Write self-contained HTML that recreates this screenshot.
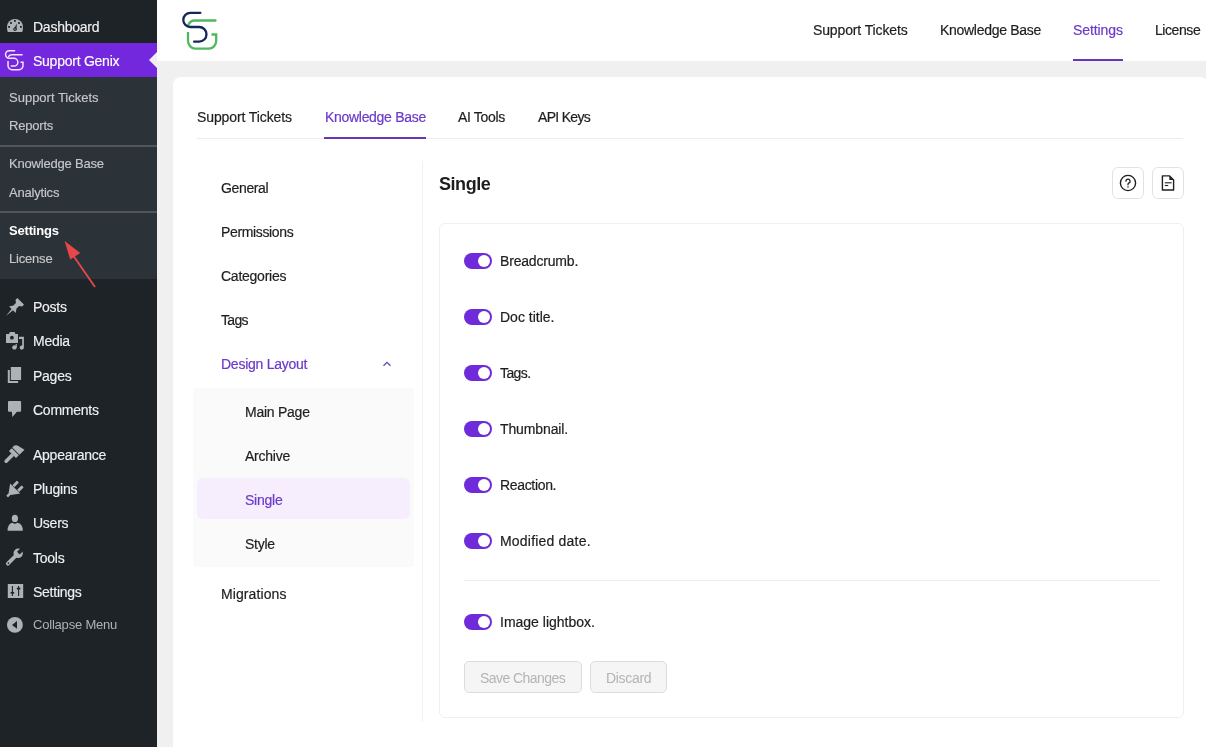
<!DOCTYPE html>
<html><head><meta charset="utf-8">
<style>
*{box-sizing:border-box;margin:0;padding:0}
html,body{width:1206px;height:747px;overflow:hidden;background:#f0f0f1;font-family:"Liberation Sans",sans-serif;position:relative}
.a{position:absolute;white-space:nowrap;will-change:transform}
.t14{font-size:14px;line-height:18px;letter-spacing:-0.25px}
.t13{font-size:13px;line-height:18px;letter-spacing:-0.2px}
#side{position:absolute;left:0;top:0;width:157px;height:747px;background:#1d2327}
#sub{position:absolute;left:0;top:77px;width:157px;height:202px;background:#2c3338}
.mi{color:#f0f0f1;-webkit-text-stroke:0.15px #f0f0f1}
.si{color:#c6c7ca;-webkit-text-stroke:0.15px #c6c7ca}
.ic{position:absolute;left:6px}
#header{position:absolute;left:157px;top:0;width:1049px;height:61px;background:#fff}
#card{position:absolute;left:173px;top:77px;width:1035px;height:700px;background:#fff;border-radius:8px}
.dark{color:#1e1e1e;-webkit-text-stroke:0.2px #1e1e1e}
.pur{color:#6c3ac9;-webkit-text-stroke:0.2px #6c3ac9}
.tog{position:absolute;left:464px;width:28px;height:16px;border-radius:8px;background:#6f2bd9}
.tog:after{content:"";position:absolute;right:2px;top:2px;width:12px;height:12px;border-radius:50%;background:#fff}
</style></head><body>
<div id="side"></div>
<div id="sub"></div>
<div class="a" style="left:0;top:43px;width:157px;height:34px;background:#7428de"></div>
<div class="a" style="left:149px;top:52px;width:0;height:0;border-top:8px solid transparent;border-bottom:8px solid transparent;border-right:8px solid #f0f0f1"></div>
<div class="a" style="left:0;top:145px;width:157px;height:2px;background:#4f555b"></div>
<div class="a" style="left:0;top:211px;width:157px;height:2px;background:#4f555b"></div>

<svg class="a" style="left:0;top:0" width="157" height="747" viewBox="0 0 157 747">
<g fill="#aeb1b5">
<path d="M7.8 32 Q7 30 7 27 A8 8 0 0 1 23 27 Q23 30 22.2 32 Z"/>
</g>
<g fill="#1d2327">
<rect x="14" y="20" width="1.8" height="1.8"/><rect x="10.1" y="22.1" width="1.8" height="1.8"/><rect x="18.1" y="22.1" width="1.8" height="1.8"/><rect x="8.2" y="26" width="1.8" height="1.8"/><rect x="20" y="26" width="1.8" height="1.8"/>
<path d="M13.8 29 L16.9 23.6 L16.4 29.5 Z"/><circle cx="15" cy="29.3" r="1.7"/>
</g>
<circle cx="15" cy="29.3" r="0.7" fill="#aeb1b5"/>
<g transform="translate(20.65 301.3) rotate(45)" fill="#aeb1b5"><path d="M-4.7 0 L4.7 0 L4.7 2.5 L2.2 4.5 L2.2 8 L4.6 11.8 L1 11.8 L0 20.5 L-1 11.8 L-4.6 11.8 L-2.2 8 L-2.2 4.5 L-4.7 2.5 Z"/></g>
<g fill="#aeb1b5">
<path d="M6 334 H9 L9.8 332 H14.6 L15.4 334 H18 V343 H6 Z M11.9 335.8 A1.9 1.9 0 1 0 11.9 339.6 A1.9 1.9 0 1 0 11.9 335.8 Z" fill-rule="evenodd"/>
<path d="M19 336.8 H23.9 V347.5 A2.1 2.1 0 1 1 22.2 345.5 V338.9 H19 Z"/>
<circle cx="14.4" cy="347.4" r="2.2"/><rect x="15.6" y="344" width="1.2" height="3.5"/>
<rect x="10.8" y="367" width="10.3" height="13"/>
<path d="M7.8 370 H9.8 V381 H18.1 V383 H7.8 Z"/>
<path d="M9 401 H20.1 Q21.1 401 21.1 402 V410.7 Q21.1 411.7 20.1 411.7 H17 L12.3 417 L11.9 411.7 H9 Q8 411.7 8 410.7 V402 Q8 401 9 401 Z"/>
</g>
<g transform="translate(7.2 460.1) rotate(-45)" fill="#aeb1b5">
<path d="M-1.5 -1.8 H8 V1.8 H-1.5 A1.8 1.8 0 0 1 -1.5 -1.8 Z"/>
<rect x="7.6" y="-5.2" width="4.1" height="10"/>
<path d="M12.5 -5.3 Q15.8 -6.2 17.6 -3 L19.6 4.9 H12.5 Z"/>
</g>
<g transform="translate(7.6 496) rotate(-45)" fill="#aeb1b5">
<rect x="-0.8" y="-1.3" width="4.5" height="2.6" rx="1"/>
<path d="M3 -1.5 L10.6 -7 V7.2 L3 1.5 Z"/>
<rect x="11" y="-4.4" width="6.5" height="3" rx="0.6"/>
<rect x="11" y="2.3" width="6.5" height="3" rx="0.6"/>
</g>
<g fill="#aeb1b5">
<ellipse cx="14.9" cy="518.4" rx="3.1" ry="3.7"/>
<path d="M7.6 530.7 Q7.6 523.5 12.5 522.7 Q14.9 524.8 17.3 522.7 Q22.8 523.5 22.8 530.7 Z"/>
</g>
<g transform="translate(8 563.5) rotate(-45)">
<path fill="#aeb1b5" d="M-0.2 -1.9 H11 V1.9 H-0.2 A1.9 1.9 0 0 1 -0.2 -1.9 Z"/>
<circle cx="14.4" cy="0" r="4.7" fill="#aeb1b5"/>
<rect x="14.6" y="-1.9" width="6" height="3.8" fill="#1d2327"/>
<circle cx="0.6" cy="0" r="0.8" fill="#1d2327"/>
</g>
<rect x="7.8" y="584" width="15.4" height="14" fill="#aeb1b5"/>
<g stroke="#1d2327" stroke-width="1.1" fill="none"><line x1="12.4" y1="586" x2="12.4" y2="596"/><line x1="10.6" y1="592.8" x2="14.2" y2="592.8" stroke-width="1.7"/><line x1="18.6" y1="586" x2="18.6" y2="596"/><line x1="16.8" y1="588.6" x2="20.4" y2="588.6" stroke-width="1.7"/></g>
<circle cx="14.9" cy="624.9" r="7.9" fill="#aeb1b5"/>
<path d="M12 624.9 L17 621 V628.8 Z" fill="#1d2327"/>
<g fill="none" stroke="#f8e4ff" stroke-width="2.8" stroke-linecap="round" transform="translate(3.8 48.2) scale(0.53)">
<path d="M20.4 4.8 H10.4 A7.1 7.1 0 0 0 10.4 19 H19.15 A7.35 7.35 0 0 1 19.15 33.7 H14.1" stroke-width="2.8"/>
<path d="M35.5 12.5 H14.7 A6.7 6.7 0 0 0 8.5 16.6" stroke-linecap="butt" stroke-width="2.8"/>
<path d="M8 24 V33.1 A7.5 7.5 0 0 0 15.5 40.6 H28.7 A7.5 7.5 0 0 0 36.2 33.1 V26.5 H31.5" stroke-linecap="butt" stroke-width="2.8"/>
</g>
<path d="M95 287 L72.5 254.5" stroke="#e8474a" stroke-width="1.8"/>
<path d="M64.6 240.9 L80.2 253 L70.2 259.6 Z" fill="#e8474a"/>
</svg>
<div class="a t14 mi" style="left:33px;top:18px">Dashboard</div>
<div class="a t14" style="left:33px;top:52px;color:#fff;-webkit-text-stroke:0.15px #fff">Support Genix</div>
<div class="a t13 si" style="left:9px;top:89px;letter-spacing:0">Support Tickets</div>
<div class="a t13 si" style="left:9px;top:117px">Reports</div>
<div class="a t13 si" style="left:9px;top:155px">Knowledge Base</div>
<div class="a t13 si" style="left:9px;top:184px">Analytics</div>
<div class="a t13" style="left:9px;top:222px;color:#fff;font-weight:bold">Settings</div>
<div class="a t13 si" style="left:9px;top:250px">License</div>
<div class="a t14 mi" style="left:33px;top:298px">Posts</div>
<div class="a t14 mi" style="left:33px;top:332px">Media</div>
<div class="a t14 mi" style="left:33px;top:367px">Pages</div>
<div class="a t14 mi" style="left:33px;top:401px">Comments</div>
<div class="a t14 mi" style="left:33px;top:446px">Appearance</div>
<div class="a t14 mi" style="left:33px;top:480px">Plugins</div>
<div class="a t14 mi" style="left:33px;top:514px">Users</div>
<div class="a t14 mi" style="left:33px;top:549px">Tools</div>
<div class="a t14 mi" style="left:33px;top:583px">Settings</div>
<div class="a t13" style="left:33px;top:616px;color:#aeb1b5">Collapse Menu</div>

<div id="header"></div>
<svg class="a" style="left:180px;top:8px" width="40" height="44" viewBox="0 0 40 44">
<g fill="none" stroke-width="2.3">
<path d="M35.5 12.5 H14.7 A6.7 6.7 0 0 0 8.5 16.6" stroke="#4fb85f" stroke-linecap="round"/>
<path d="M8 24 V33.1 A7.5 7.5 0 0 0 15.5 40.6 H28.7 A7.5 7.5 0 0 0 36.2 33.1 V26.5 H31.5" stroke="#4fb85f" stroke-linecap="butt"/>
<path d="M20.4 4.8 H10.4 A7.1 7.1 0 0 0 10.4 19 H19.15 A7.35 7.35 0 0 1 19.15 33.7 H14.1" stroke="#14265c" stroke-linecap="round"/>
</g></svg>

<div class="a t14 dark" style="left:813px;top:21px;letter-spacing:-0.13px">Support Tickets</div>
<div class="a t14 dark" style="left:940px;top:21px;letter-spacing:-0.29px">Knowledge Base</div>
<div class="a t14 pur" style="left:1073px;top:21px;letter-spacing:-0.1px">Settings</div>
<div class="a" style="left:1073px;top:59px;width:50px;height:2px;background:#6636b8"></div>
<div class="a t14 dark" style="left:1155px;top:21px;letter-spacing:-0.43px">License</div>

<div id="card"></div>
<div class="a" style="left:197px;top:138px;width:986px;height:1px;background:#ececec"></div>
<div class="a t14 dark" style="left:197px;top:108px;letter-spacing:-0.1px">Support Tickets</div>
<div class="a t14 pur" style="left:325px;top:108px;letter-spacing:-0.3px">Knowledge Base</div>
<div class="a" style="left:324px;top:137px;width:102px;height:2px;background:#6636b8"></div>
<div class="a t14 dark" style="left:458px;top:108px;letter-spacing:-0.34px">AI Tools</div>
<div class="a t14 dark" style="left:538px;top:108px;letter-spacing:-0.7px">API Keys</div>

<div class="a" style="left:422px;top:161px;width:1px;height:561px;background:#f1f1f1"></div>
<div class="a t14 dark" style="left:221px;top:179px;letter-spacing:-0.36px">General</div>
<div class="a t14 dark" style="left:221px;top:223px;letter-spacing:-0.35px">Permissions</div>
<div class="a t14 dark" style="left:221px;top:267px">Categories</div>
<div class="a t14 dark" style="left:221px;top:311px;letter-spacing:-0.7px">Tags</div>
<div class="a t14 pur" style="left:221px;top:355px">Design Layout</div>
<svg class="a" style="left:380px;top:357px" width="14" height="12" viewBox="0 0 14 12"><path d="M3.5 8.8 L7 5.3 L10.5 8.8" fill="none" stroke="#6a45b8" stroke-width="1.3"/></svg>
<div class="a" style="left:193px;top:388px;width:221px;height:179px;background:#fafafa;border-radius:4px"></div>
<div class="a" style="left:197px;top:478px;width:213px;height:41px;background:#f7eefd;border-radius:6px"></div>
<div class="a t14 dark" style="left:245px;top:403px">Main Page</div>
<div class="a t14 dark" style="left:245px;top:447px">Archive</div>
<div class="a t14 pur" style="left:245px;top:491px">Single</div>
<div class="a t14 dark" style="left:245px;top:535px">Style</div>
<div class="a t14 dark" style="left:221px;top:585px;letter-spacing:0.1px">Migrations</div>

<div class="a dark" style="left:439px;top:172px;font-size:18px;line-height:24px;font-weight:bold;letter-spacing:-0.45px;-webkit-text-stroke:0">Single</div>
<div class="a" style="left:1112px;top:167px;width:32px;height:32px;border:1px solid #e2e2e2;border-radius:6px"></div>
<div class="a" style="left:1152px;top:167px;width:32px;height:32px;border:1px solid #e2e2e2;border-radius:6px"></div>

<svg class="a" style="left:1112px;top:167px" width="72" height="32" viewBox="0 0 72 32">
<circle cx="16" cy="16" r="7.6" fill="none" stroke="#1e1e1e" stroke-width="1.4"/>
<path d="M13.9 14.2 A2.1 2.1 0 1 1 16.6 16.2 Q16 16.5 16 17.4 V17.8" fill="none" stroke="#1e1e1e" stroke-width="1.3" stroke-linecap="round"/>
<circle cx="16" cy="19.9" r="0.75" fill="#1e1e1e"/>
<path d="M50.4 8.9 H57.6 L61.6 12.9 V23 H50.4 Z" fill="none" stroke="#1e1e1e" stroke-width="1.4" stroke-linejoin="round"/>
<path d="M57.4 9 V13 H61.4 Z" fill="#1e1e1e"/>
<line x1="52.8" y1="15.8" x2="59.6" y2="15.8" stroke="#1e1e1e" stroke-width="1.1"/>
<line x1="52.8" y1="18.5" x2="56.2" y2="18.5" stroke="#1e1e1e" stroke-width="1.1"/>
</svg>
<div class="a" style="left:439px;top:223px;width:745px;height:495px;border:1px solid #efefef;border-radius:6px"></div>
<div class="tog" style="top:253px"></div>
<div class="tog" style="top:309px"></div>
<div class="tog" style="top:365px"></div>
<div class="tog" style="top:421px"></div>
<div class="tog" style="top:477px"></div>
<div class="tog" style="top:533px"></div>
<div class="tog" style="top:614px"></div>
<div class="a t14 dark" style="left:500px;top:252px;letter-spacing:-0.18px">Breadcrumb.</div>
<div class="a t14 dark" style="left:500px;top:308px;letter-spacing:0px">Doc title.</div>
<div class="a t14 dark" style="left:500px;top:364px;letter-spacing:-0.6px">Tags.</div>
<div class="a t14 dark" style="left:500px;top:420px;letter-spacing:-0.12px">Thumbnail.</div>
<div class="a t14 dark" style="left:500px;top:476px;letter-spacing:-0.33px">Reaction.</div>
<div class="a t14 dark" style="left:500px;top:532px;letter-spacing:0.2px">Modified date.</div>
<div class="a" style="left:464px;top:580px;width:696px;height:1px;background:#ececec"></div>
<div class="a t14 dark" style="left:500px;top:613px;letter-spacing:0px">Image lightbox.</div>
<div class="a" style="left:464px;top:661px;width:118px;height:32px;border:1px solid #dcdcdc;border-radius:5px;background:#f5f5f5"></div>
<div class="a" style="left:590px;top:661px;width:77px;height:32px;border:1px solid #dcdcdc;border-radius:5px;background:#f5f5f5"></div>
<div class="a t14" style="left:480px;top:669px;color:#b4b4b4;letter-spacing:-0.55px">Save Changes</div>
<div class="a t14" style="left:606px;top:669px;color:#b4b4b4;letter-spacing:-0.3px">Discard</div>
</body></html>
